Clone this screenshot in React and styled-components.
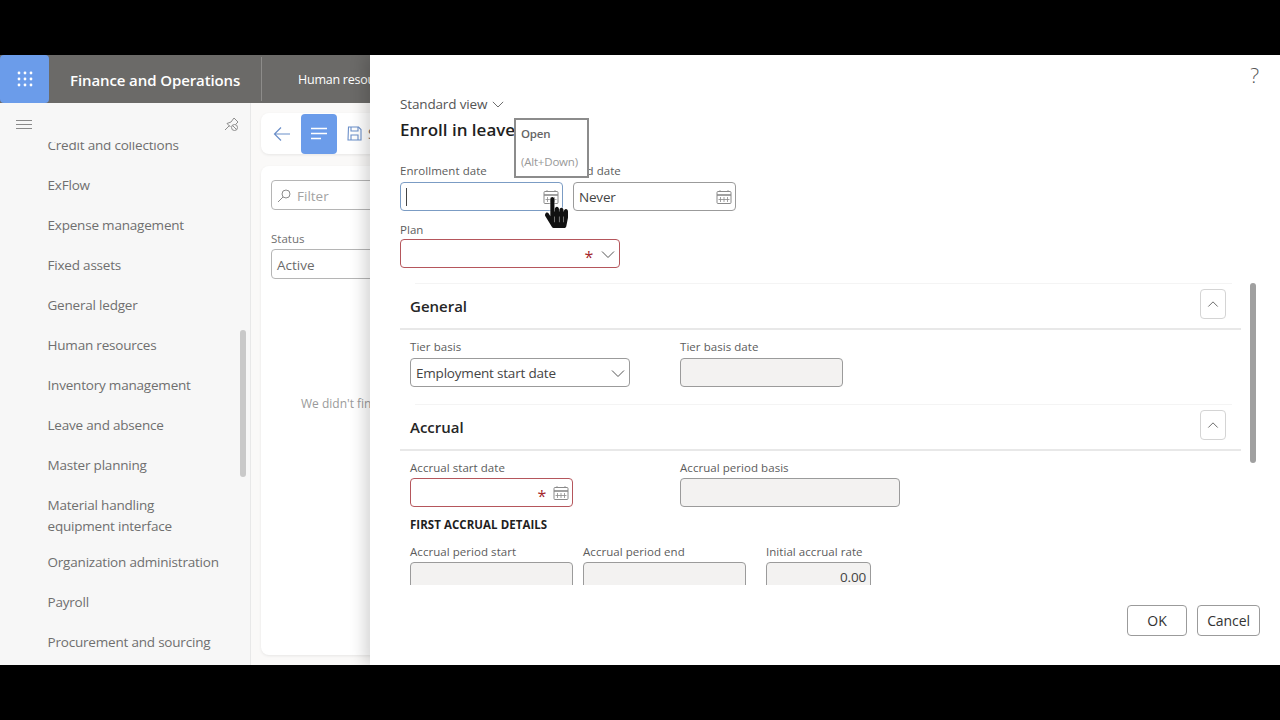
import React from "react";
import styled, { createGlobalStyle } from "styled-components";
import { FaHandPointer } from "react-icons/fa";

const font = `"Open Sans", "Noto Sans", sans-serif`;

const GlobalStyle = createGlobalStyle`
  html, body {
    margin: 0;
    height: 100%;
    background: #000;
    font-family: ${font};
  }
`;

const Stage = styled.div`
  height: 720px;
  padding-top: 55px;
  box-sizing: border-box;
  overflow: hidden;
`;

const Frame = styled.div`
  position: relative;
  height: 610px;
  display: flex;
  flex-direction: column;
  overflow: hidden;
  background: #faf9f8;
`;

const Header = styled.header`
  height: 48px;
  flex: none;
  display: flex;
  align-items: center;
  background: #6b6a68;
  color: #fff;
`;

const Waffle = styled.button`
  width: 49px;
  height: 48px;
  padding: 0;
  border: 0;
  border-radius: 4px;
  background: #6b9cea;
  display: flex;
  align-items: center;
  justify-content: center;
`;

const AppName = styled.div`
  width: 191px;
  padding-left: 21px;
  height: 44px;
  line-height: 46px;
  font-size: 15px;
  font-weight: 600;
  letter-spacing: -0.1px;
  border-right: 1px solid #8d8c8a;
`;

const Crumb = styled.div`
  margin-left: 36px;
  padding-top: 1px;
  font-size: 12.5px;
  letter-spacing: -0.25px;
  white-space: nowrap;
`;

const Body = styled.div`
  flex: 1;
  min-height: 0;
  display: flex;
`;

const Sidebar = styled.nav`
  position: relative;
  width: 250px;
  flex: none;
  background: #f7f7f7;
  border-right: 1px solid #e8e8e8;
  overflow: hidden;
`;

const SideTop = styled.div`
  height: 39px;
  padding: 6px 11px 3px 16px;
  display: flex;
  align-items: center;
  justify-content: space-between;
  position: relative;
  z-index: 1;
  background: #f7f7f7;
  box-sizing: border-box;
`;

const SideList = styled.ul`
  list-style: none;
  margin: -17px 0 0;
  padding: 0;
`;

const SideItem = styled.li`
  height: ${(p) => (p.$tall ? "57px" : "40px")};
  line-height: ${(p) => (p.$tall ? "21px" : "40px")};
  padding: ${(p) => (p.$tall ? "10px 0 0 47.5px" : "0 0 0 47.5px")};
  width: 185px;
  box-sizing: ${(p) => (p.$tall ? "border-box" : "content-box")};
  color: #6f6f6f;
  font-size: 13.5px;
  letter-spacing: -0.2px;
  white-space: ${(p) => (p.$tall ? "normal" : "nowrap")};
`;

const SideThumb = styled.div`
  position: absolute;
  left: 240px;
  top: 227px;
  width: 6px;
  height: 147px;
  border-radius: 3px;
  background: #c9c9c9;
`;

const Main = styled.main`
  flex: 1;
  min-width: 0;
  padding: 10px 0 10px 10px;
  display: flex;
  flex-direction: column;
  gap: 12px;
`;

const Toolbar = styled.div`
  height: 41px;
  flex: none;
  background: #fff;
  border-radius: 8px;
  box-shadow: 0 1px 3px rgba(0, 0, 0, 0.08);
  display: flex;
  align-items: center;
  color: #6b6b6b;
  font-size: 14px;
`;

const BackButton = styled.div`
  width: 40px;
  padding-left: 2px;
  box-sizing: border-box;
  display: flex;
  justify-content: center;
`;

const ActiveButton = styled.div`
  width: 36px;
  height: 40px;
  border-radius: 4px;
  background: #6b9cea;
  display: flex;
  align-items: center;
  justify-content: center;
`;

const SaveButton = styled.div`
  margin-left: 10px;
  display: flex;
  align-items: center;
  gap: 6px;
`;

const Card = styled.section`
  flex: 1;
  background: #fff;
  border-radius: 8px;
  box-shadow: 0 1px 3px rgba(0, 0, 0, 0.08);
  padding: 14px 10px;
`;

const FilterBox = styled.div`
  width: 240px;
  height: 30px;
  box-sizing: border-box;
  border: 1px solid #b5b5b5;
  border-radius: 4px;
  display: flex;
  align-items: center;
  gap: 6px;
  padding: 2px 0 0 5px;
  color: #a3a3a3;
  font-size: 13.5px;
`;

const StatusLabel = styled.div`
  margin-top: 20px;
  height: 18px;
  line-height: 18px;
  font-size: 11.5px;
  color: #6f6f6f;
`;

const StatusBox = styled.div`
  width: 240px;
  height: 30px;
  margin-top: 1px;
  line-height: 30px;
  box-sizing: border-box;
  border: 1px solid #b5b5b5;
  border-radius: 4px;
  padding-left: 5px;
  font-size: 13.5px;
  color: #6b6b6b;
`;

const EmptyText = styled.p`
  margin: 116px 0 0 30px;
  line-height: 18px;
  font-size: 12px;
  color: #9a9a9a;
  white-space: nowrap;
`;

const Dialog = styled.aside`
  position: absolute;
  top: 0;
  right: 0;
  bottom: 0;
  width: 910px;
  box-sizing: border-box;
  padding: 0 20px 0 30px;
  background: #fff;
  box-shadow: -6px 0 14px rgba(0, 0, 0, 0.16);
  display: flex;
  flex-direction: column;
  color: #333;
`;

const HelpRow = styled.div`
  height: 40px;
  flex: none;
  display: flex;
  align-items: center;
  justify-content: flex-end;
  font-size: 21px;
  font-weight: 300;
  color: #555;
  padding-right: 1px;
`;

const ViewRow = styled.div`
  height: 18px;
  flex: none;
  display: flex;
  align-items: center;
  gap: 5px;
  font-size: 13.5px;
  letter-spacing: -0.15px;
  color: #555;
`;

const Title = styled.h1`
  margin: 5px 0 0;
  height: 24px;
  line-height: 24px;
  font-size: 17px;
  font-weight: 600;
  color: #1f1f1f;
`;

const FieldRow = styled.div`
  display: flex;
  gap: ${(p) => p.$gap || 10}px;
  margin-top: ${(p) => p.$top || 0}px;
`;

const Field = styled.div`
  width: ${(p) => p.$w}px;
  flex: none;
  margin-left: ${(p) => p.$ml || 0}px;
`;

const Label = styled.div`
  height: 16px;
  line-height: 16px;
  margin-bottom: ${(p) => p.$gap ?? 3}px;
  font-size: 11.5px;
  font-weight: 500;
  letter-spacing: 0.05px;
  color: #5c5c5c;
  white-space: nowrap;
`;

const Input = styled.div`
  height: 29px;
  box-sizing: border-box;
  border: 1px solid ${(p) => (p.$error ? "#b5565c" : p.$focus ? "#7b9cc4" : "#9b9b9b")};
  border-radius: 4px;
  background: ${(p) => (p.$disabled ? "#f3f2f1" : "#fff")};
  display: flex;
  align-items: center;
  padding: 0 3px 0 5px;
  font-size: 13.5px;
  letter-spacing: -0.2px;
  color: #444;
`;

const Value = styled.span`
  flex: 1;
  display: flex;
  align-items: center;
  justify-content: ${(p) => (p.$align === "right" ? "flex-end" : "flex-start")};
  padding: 1px ${(p) => (p.$align === "right" ? "1px" : "0")} 0 0;
  white-space: nowrap;
`;

const Caret = styled.span`
  width: 1px;
  height: 18px;
  background: #444;
`;

const Star = styled.span`
  color: #a4262c;
  font-size: 16px;
  line-height: 16px;
  margin: 6px ${(p) => p.$gap}px 0 0;
`;

const SelectArrow = styled.span`
  display: flex;
  margin-right: 1px;
`;

const ScrollArea = styled.div`
  position: relative;
  height: 302px;
  margin-top: 15px;
  flex: none;
  overflow: hidden;
`;

const ScrollThumb = styled.div`
  position: absolute;
  right: 4px;
  top: 0;
  width: 6px;
  height: 180px;
  border-radius: 3px;
  background: #a0a0a0;
`;

const Section = styled.section`
  width: 841px;
`;

const SectionHead = styled.div`
  height: 44px;
  margin-top: 1px;
  display: flex;
  justify-content: space-between;
  padding: 0 15px 0 10px;
  border-bottom: 2px solid #e8e8e8;
  position: relative;

  &::before {
    content: "";
    position: absolute;
    top: -1px;
    left: 15px;
    right: 9px;
    height: 1px;
    background: #f4f4f4;
  }
`;

const SectionTitle = styled.h2`
  margin: 0;
  line-height: 45px;
  font-size: 15px;
  font-weight: 600;
  color: #262626;
`;

const Collapse = styled.button`
  width: 26px;
  height: 30px;
  margin-top: 5px;
  padding: 0;
  background: #fff;
  border: 1px solid #d4d4d4;
  border-radius: 4px;
  display: flex;
  align-items: center;
  justify-content: center;
`;

const SectionBody = styled.div`
  padding: ${(p) => p.$top}px 0 ${(p) => p.$bottom || 0}px 10px;
`;

const SubHeading = styled.h3`
  margin: 9px 0 0;
  height: 18px;
  line-height: 18px;
  font-size: 11.5px;
  font-weight: 700;
  letter-spacing: 0.05px;
  color: #1f1f1f;
`;

const Footer = styled.footer`
  margin-top: 20px;
  display: flex;
  justify-content: flex-end;
  gap: 10px;
`;

const FootButton = styled.button`
  width: ${(p) => p.$w}px;
  height: 31px;
  padding: 0;
  background: #fff;
  border: 1px solid #9b9b9b;
  border-radius: 4px;
  font-family: ${font};
  font-size: 14px;
  font-weight: 500;
  letter-spacing: -0.1px;
  color: #333;
`;

const Tip = styled.div`
  position: absolute;
  left: 144px;
  top: 63px;
  width: 75px;
  height: 60px;
  box-sizing: border-box;
  border: 2px solid #8c8c8c;
  background: #fff;
  padding: 5px 0 0 5px;
  font-size: 11.5px;
  letter-spacing: -0.2px;
  white-space: nowrap;
`;

const TipTitle = styled.div`
  height: 18px;
  line-height: 18px;
  font-weight: 600;
  color: #666;
`;

const TipKeys = styled.div`
  margin-top: 10px;
  height: 18px;
  line-height: 18px;
  color: #999;
`;

const Pointer = styled.div`
  position: absolute;
  left: 175px;
  top: 142px;
  color: #111;
  line-height: 0;
  filter: drop-shadow(0 0 1px #fff);

  svg {
    width: 23px;
    height: 31px;
  }
`;

const Calendar = () => (
  <svg width="16" height="16" viewBox="0 0 16 16" fill="none" stroke="#8a8a8a" strokeWidth="1">
    <rect x="1" y="2.5" width="14" height="12" rx="1" />
    <path d="M1 6h14" strokeWidth="1.6" />
    <path d="M4 1v2M12 1v2M4.5 8v5M8 8v5M11.5 8v5M2.5 10.5h11" strokeWidth="0.8" />
  </svg>
);

const Chevron = ({ size = 14, up, color = "#555" }) => (
  <svg width={size} height={size} viewBox="0 0 14 14" fill="none" stroke={color} strokeWidth="1">
    <path d={up ? "M1.5 10L7 4.5 12.5 10" : "M1 4.5L7 10.5 13 4.5"} />
  </svg>
);

const WaffleIcon = () => (
  <svg width="16" height="16" viewBox="0 0 16 16" fill="#fff">
    {[2, 8, 14].map((y) =>
      [2, 8, 14].map((x) => <circle key={`${x}-${y}`} cx={x} cy={y} r="1.4" />)
    )}
  </svg>
);

const Hamburger = () => (
  <svg width="16" height="9" viewBox="0 0 16 9" stroke="#8a8a8a" strokeWidth="1">
    <path d="M0 .5h16M0 4.5h16M0 8.5h16" />
  </svg>
);

const PinOff = () => (
  <svg width="15" height="15" viewBox="0 0 15 15" fill="none" stroke="#8d8d8d" strokeWidth="1">
    <path d="M1 13l4.5-4.5M3 6.5l4-1.5 3-4 4 4-2.5 2.5M3 6.5l3.5 3.5" />
    <circle cx="10.5" cy="10.5" r="3" />
    <path d="M8.5 8.5l4 4" />
  </svg>
);

const BackArrow = () => (
  <svg width="18" height="16" viewBox="0 0 18 16" fill="none" stroke="#6b8fc9" strokeWidth="1.2">
    <path d="M17 8H1.5M8 1.5L1.5 8 8 14.5" />
  </svg>
);

const LinesIcon = () => (
  <svg width="18" height="13" viewBox="0 0 18 13" stroke="#fff" strokeWidth="1.5">
    <path d="M1 1.5h16M1 6.5h16M1 11.5h10" />
  </svg>
);

const SaveIcon = () => (
  <svg width="15" height="15" viewBox="0 0 15 15" fill="none" stroke="#6b8fc9" strokeWidth="1.1">
    <path d="M1.5 1h10l2.5 2.5v10.5H1z" />
    <path d="M4 1v4h7V1M4 14V9h7v5" />
  </svg>
);

const SearchIcon = () => (
  <svg width="14" height="14" viewBox="0 0 14 14" fill="none" stroke="#8d8d8d" strokeWidth="1">
    <circle cx="9" cy="5" r="4" />
    <path d="M6 8l-5 5" />
  </svg>
);

const navItems = [
  "Credit and collections",
  "ExFlow",
  "Expense management",
  "Fixed assets",
  "General ledger",
  "Human resources",
  "Inventory management",
  "Leave and absence",
  "Master planning",
  "Material handling equipment interface",
  "Organization administration",
  "Payroll",
  "Procurement and sourcing",
];

export default function App() {
  return (
    <Stage>
      <GlobalStyle />
      <Frame>
        <Header>
          <Waffle>
            <WaffleIcon />
          </Waffle>
          <AppName>Finance and Operations</AppName>
          <Crumb>Human resources</Crumb>
        </Header>
        <Body>
          <Sidebar>
            <SideTop>
              <Hamburger />
              <PinOff />
            </SideTop>
            <SideList>
              {navItems.map((item) => (
                <SideItem key={item} $tall={item.startsWith("Material")}>
                  {item}
                </SideItem>
              ))}
            </SideList>
            <SideThumb />
          </Sidebar>
          <Main>
            <Toolbar>
              <BackButton>
                <BackArrow />
              </BackButton>
              <ActiveButton>
                <LinesIcon />
              </ActiveButton>
              <SaveButton>
                <SaveIcon />
                Save
              </SaveButton>
            </Toolbar>
            <Card>
              <FilterBox>
                <SearchIcon />
                Filter
              </FilterBox>
              <StatusLabel>Status</StatusLabel>
              <StatusBox>Active</StatusBox>
              <EmptyText>We didn't find anything to show here.</EmptyText>
            </Card>
          </Main>
        </Body>
        <Dialog>
          <HelpRow>?</HelpRow>
          <ViewRow>
            Standard view
            <Chevron size={12} />
          </ViewRow>
          <Title>Enroll in leave</Title>
          <FieldRow $top={21}>
            <Field $w={163}>
              <Label>Enrollment date</Label>
              <Input $focus>
                <Value>
                  <Caret />
                </Value>
                <Calendar />
              </Input>
            </Field>
            <Field $w={163}>
              <Label>End date</Label>
              <Input>
                <Value>Never</Value>
                <Calendar />
              </Input>
            </Field>
          </FieldRow>
          <FieldRow $top={11}>
            <Field $w={220}>
              <Label $gap={1}>Plan</Label>
              <Input $error>
                <Value />
                <Star $gap={8}>*</Star>
                <SelectArrow>
                  <Chevron />
                </SelectArrow>
              </Input>
            </Field>
          </FieldRow>
          <ScrollArea>
            <Section>
              <SectionHead>
                <SectionTitle>General</SectionTitle>
                <Collapse>
                  <Chevron size={12} up />
                </Collapse>
              </SectionHead>
              <SectionBody $top={9} $bottom={17}>
                <FieldRow>
                  <Field $w={220}>
                    <Label>Tier basis</Label>
                    <Input>
                      <Value>Employment start date</Value>
                      <SelectArrow>
                        <Chevron />
                      </SelectArrow>
                    </Input>
                  </Field>
                  <Field $w={163} $ml={40}>
                    <Label>Tier basis date</Label>
                    <Input $disabled />
                  </Field>
                </FieldRow>
              </SectionBody>
            </Section>
            <Section>
              <SectionHead>
                <SectionTitle>Accrual</SectionTitle>
                <Collapse>
                  <Chevron size={12} up />
                </Collapse>
              </SectionHead>
              <SectionBody $top={9}>
                <FieldRow>
                  <Field $w={163}>
                    <Label $gap={2}>Accrual start date</Label>
                    <Input $error>
                      <Value />
                      <Star $gap={7}>*</Star>
                      <Calendar />
                    </Input>
                  </Field>
                  <Field $w={220} $ml={97}>
                    <Label $gap={2}>Accrual period basis</Label>
                    <Input $disabled />
                  </Field>
                </FieldRow>
                <SubHeading>FIRST ACCRUAL DETAILS</SubHeading>
                <FieldRow $top={10}>
                  <Field $w={163}>
                    <Label $gap={2}>Accrual period start</Label>
                    <Input $disabled />
                  </Field>
                  <Field $w={163}>
                    <Label $gap={2}>Accrual period end</Label>
                    <Input $disabled />
                  </Field>
                  <Field $w={105} $ml={10}>
                    <Label $gap={2}>Initial accrual rate</Label>
                    <Input $disabled>
                      <Value $align="right">0.00</Value>
                    </Input>
                  </Field>
                </FieldRow>
              </SectionBody>
            </Section>
            <ScrollThumb />
          </ScrollArea>
          <Footer>
            <FootButton $w={60}>OK</FootButton>
            <FootButton $w={63}>Cancel</FootButton>
          </Footer>
          <Tip>
            <TipTitle>Open</TipTitle>
            <TipKeys>(Alt+Down)</TipKeys>
          </Tip>
          <Pointer>
            <FaHandPointer preserveAspectRatio="none" />
          </Pointer>
        </Dialog>
      </Frame>
    </Stage>
  );
}
